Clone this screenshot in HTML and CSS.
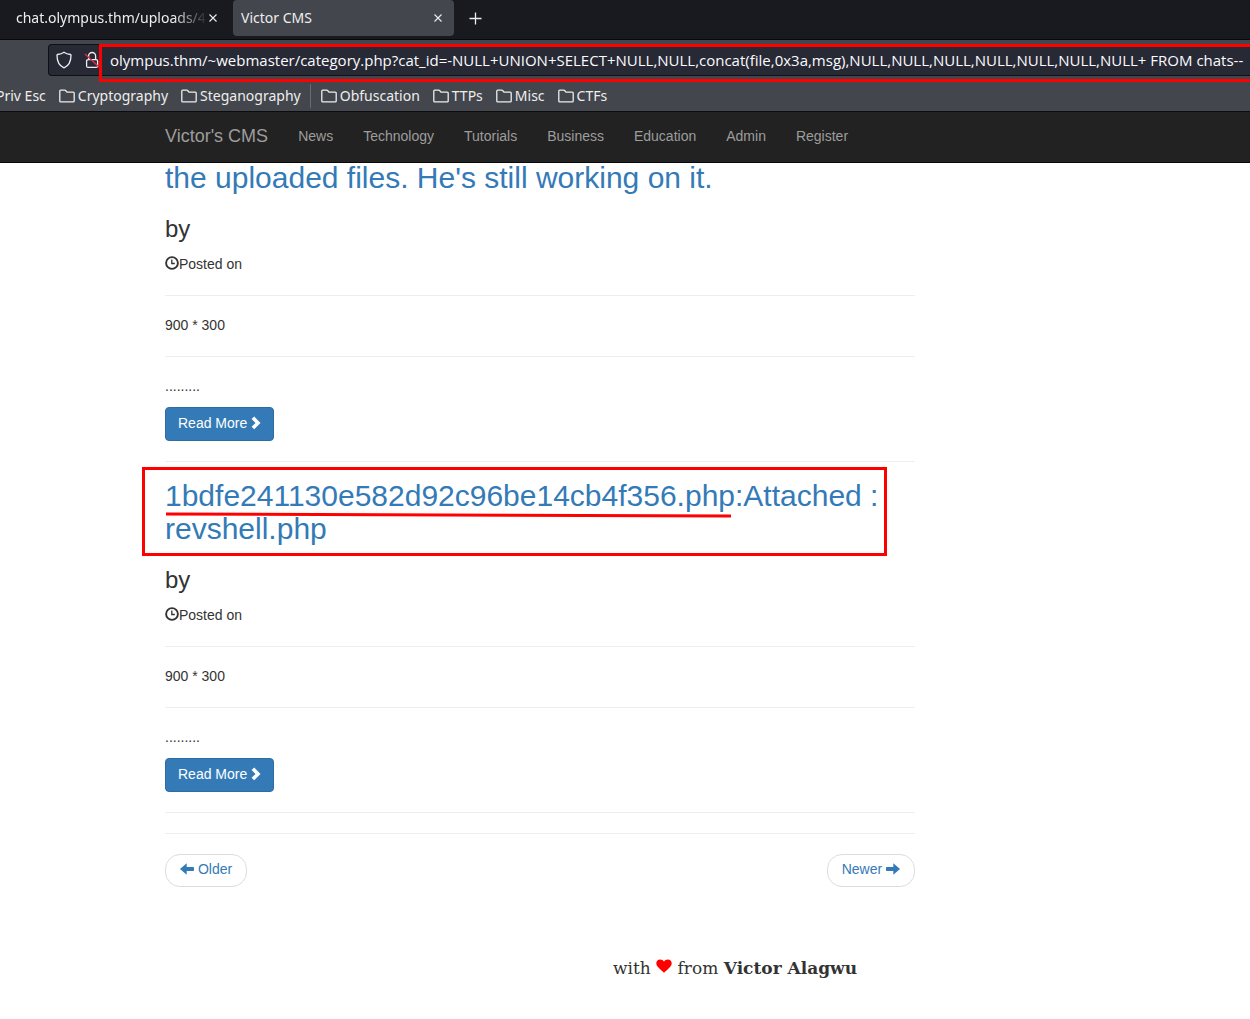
FILE: index.html
```html
<!DOCTYPE html>
<html lang="en">
<head>
<meta charset="utf-8">
<meta name="viewport" content="width=device-width, initial-scale=1">
<title>Victor CMS</title>
<link rel="stylesheet" href="styles.css">
</head>
<body>
<svg class="defs" aria-hidden="true">
  <symbol id="folder" viewBox="0 0 16 14"><path d="M1.7 12.8h12.6c.5 0 .9-.4.9-.9V4.100c0-.5-.4-.9-.9-.9H8L6.600 1.500c-.2-.2-.4-.3-.7-.3H1.700c-.5 0-.9.4-.9.9v9.800c0 .5.400.9.9.9z" fill="none" stroke="currentColor" stroke-width="1.300"/></symbol>
  <symbol id="close" viewBox="0 0 10 10"><path d="M1.5 1.5l7 7M8.500 1.500l-7 7" stroke="currentColor" stroke-width="1.1"/></symbol>
  <symbol id="clock" viewBox="0 0 14 14"><circle cx="7" cy="7" r="5.900" fill="none" stroke="currentColor" stroke-width="1.900"/><path d="M6.800 3.500v4h3" fill="none" stroke="currentColor" stroke-width="1.300"/></symbol>
  <symbol id="chevron" viewBox="0 0 10 14"><path d="M3.200.4L9.500 6.900 3.200 13.300.6 10.800 4.500 6.900.6 3z" fill="currentColor"/></symbol>
  <symbol id="arrow-right" viewBox="0 0 14 12"><path d="M14 6L7.300.2V4H.7c-.4 0-.7.3-.7.7v2.600c0 .4.300.7.7.7h6.600v3.800z" fill="currentColor"/></symbol>
  <symbol id="arrow-left" viewBox="0 0 14 12"><path d="M0 6L6.700.2V4h6.600c.4 0 .7.300.7.7v2.600c0 .4-.3.7-.7.7H6.700v3.800z" fill="currentColor"/></symbol>
</svg>

<header class="browser">
  <div class="tabs">
    <div class="tab">
      <span class="tab-title fading">chat.olympus.thm/uploads/47</span>
      <button class="tab-close" aria-label="Close tab"><svg width="10" height="10"><use href="#close"/></svg></button>
    </div>
    <div class="tab active">
      <span class="tab-title">Victor CMS</span>
      <button class="tab-close" aria-label="Close tab"><svg width="10" height="10"><use href="#close"/></svg></button>
    </div>
    <button class="new-tab" aria-label="New tab"><svg width="13" height="13" viewBox="0 0 13 13"><path d="M6.500.5v12M.5 6.500h12" stroke="currentColor" stroke-width="1.300"/></svg></button>
  </div>
  <div class="toolbar">
    <div class="address">
      <svg class="shield" width="16" height="18" viewBox="0 0 16 18"><path d="M8 1.200C6.200 2.500 3.800 3.200 1.600 3.500c-.4.100-.6.400-.6.700 0 5.300 1.500 10.300 7 12.600 5.500-2.300 7-7.300 7-12.600 0-.3-.2-.6-.6-.7C12.200 3.200 9.800 2.500 8 1.200z" fill="none" stroke="currentColor" stroke-width="1.300"/></svg>
      <svg class="lock" width="16" height="18" viewBox="0 0 16 18"><rect x="2.600" y="8.600" width="11" height="7.800" rx="1.500" fill="none" stroke="currentColor" stroke-width="1.300"/><path d="M4.600 8.600V5a3.500 3.500 0 0 1 7 0v3.600" fill="none" stroke="currentColor" stroke-width="1.300"/><path d="M1 3l14 13" stroke="#e22850" stroke-width="1.400"/></svg>
      <input class="url" type="text" aria-label="Address" value="olympus.thm/~webmaster/category.php?cat_id=-NULL+UNION+SELECT+NULL,NULL,concat(file,0x3a,msg),NULL,NULL,NULL,NULL,NULL,NULL,NULL+ FROM chats--">
    </div>
    <div class="url-mark"></div>
  </div>
  <nav class="bookmarks" aria-label="Bookmarks">
    <a href="#">Priv Esc</a>
    <a href="#"><svg width="16" height="14"><use href="#folder"/></svg>Cryptography</a>
    <a href="#"><svg width="16" height="14"><use href="#folder"/></svg>Steganography</a>
    <span class="separator"></span>
    <a href="#"><svg width="16" height="14"><use href="#folder"/></svg>Obfuscation</a>
    <a href="#"><svg width="16" height="14"><use href="#folder"/></svg>TTPs</a>
    <a href="#"><svg width="16" height="14"><use href="#folder"/></svg>Misc</a>
    <a href="#"><svg width="16" height="14"><use href="#folder"/></svg>CTFs</a>
  </nav>
</header>

<nav class="navbar" aria-label="Site">
  <a class="brand" href="#">Victor's CMS</a>
  <a href="#">News</a>
  <a href="#">Technology</a>
  <a href="#">Tutorials</a>
  <a href="#">Business</a>
  <a href="#">Education</a>
  <a href="#">Admin</a>
  <a href="#">Register</a>
</nav>

<main class="posts">
  <article>
    <h2><a href="#">the uploaded files. He's still working on it.</a></h2>
    <h3>by</h3>
    <p><svg class="clock" width="14" height="14"><use href="#clock"/></svg>Posted on</p>
    <hr>
    <p>900 * 300</p>
    <hr>
    <p>.........</p>
    <a class="read-more" href="#">Read More <svg width="10" height="14"><use href="#chevron"/></svg></a>
    <hr>
  </article>
  <article>
    <h2 class="marked"><a href="#">1bdfe241130e582d92c96be14cb4f356.php:Attached : revshell.php</a>
      <svg class="underline" width="568" height="8" viewBox="0 0 568 8"><path d="M1 3L566 5" stroke="#f00" stroke-width="3"/></svg>
    </h2>
    <h3>by</h3>
    <p><svg class="clock" width="14" height="14"><use href="#clock"/></svg>Posted on</p>
    <hr>
    <p>900 * 300</p>
    <hr>
    <p>.........</p>
    <a class="read-more" href="#">Read More <svg width="10" height="14"><use href="#chevron"/></svg></a>
    <hr>
  </article>
  <hr class="end">
  <div class="pager">
    <a href="#"><svg width="14" height="12"><use href="#arrow-left"/></svg> Older</a>
    <a href="#">Newer <svg width="14" height="12"><use href="#arrow-right"/></svg></a>
  </div>
</main>

<footer class="credit">with <svg width="16" height="14" viewBox="0 0 16 14"><path d="M8 13.800C6.500 12.200 4 10.300 2.200 8.200.9 6.700.3 5.500.3 4.200.3 2 2 .4 4.200.4 5.800.4 7.200 1.200 8 2.600 8.800 1.200 10.200.4 11.800.4c2.200 0 3.900 1.600 3.900 3.800 0 1.300-.6 2.500-1.900 4C12 10.300 9.500 12.200 8 13.800z" fill="#f00"/></svg> from <strong>Victor Alagwu</strong></footer>
</body>
</html>
```
FILE: styles.css
```css
* { box-sizing: border-box; }

body {
  margin: 0;
  background: #fff;
  color: #333;
  font: 14px/20px "Liberation Sans", Arial, sans-serif;
  overflow-x: hidden;
}

a { color: #337ab7; text-decoration: none; }
button { border: 0; padding: 0; background: none; color: inherit; }
.defs { display: none; }

/* Browser window */
.browser {
  background: #43464c;
  color: #eee;
  font: 14px/20px "Noto Sans", sans-serif;
  border-bottom: 1px solid #0c0c0e;
}

.tabs {
  display: flex;
  height: 40px;
  background: #191a1f;
  border-bottom: 1px solid #08080a;
}

.tab {
  display: flex;
  align-items: center;
  width: 221px;
  height: 36px;
  padding: 0 11px 0 8px;
}
.tab:first-child { width: 233px; padding: 0 15px 0 16px; }
.tab.active { background: #43464c; border-radius: 4px; }
.tab-title { flex: 1; overflow: hidden; white-space: nowrap; }
.fading {
  -webkit-mask-image: linear-gradient(to right, #000 82%, transparent);
  mask-image: linear-gradient(to right, #000 82%, transparent);
}
.tab-close { display: flex; }
.new-tab { margin-left: 15px; height: 37px; display: flex; align-items: center; }

.toolbar { position: relative; padding: 4px 0 4px 48px; }
.address {
  display: flex;
  align-items: center;
  height: 32px;
  padding-left: 7px;
  background: #272935;
  border: 1px solid #0f1014;
  border-right: 0;
  border-radius: 4px 0 0 4px;
}
.address svg { flex: none; }
.lock { margin-left: 12px; }
.url {
  flex: 1;
  min-width: 0;
  height: 30px;
  padding: 0 0 0 10px;
  border: 0;
  outline: 0;
  background: none;
  color: #fbfbfe;
  font: 15px/20px "Open Sans", "Noto Sans", sans-serif;
}
.url-mark {
  position: absolute;
  inset: 4px 0 -2px 99px;
  border: 3px solid #f00;
  border-right: 0;
}

.bookmarks {
  display: flex;
  align-items: center;
  gap: 13px;
  height: 31px;
  margin-left: -4px;
  white-space: nowrap;
}
.bookmarks a { display: flex; align-items: center; gap: 3px; color: inherit; }
.separator { width: 1px; height: 24px; margin: 0 -3px 0 -4px; background: #6a6c71; }

/* Site */
.navbar {
  position: relative;
  z-index: 1;
  display: flex;
  height: 51px;
  padding-left: 150px;
  background: #222;
  border-bottom: 1px solid #080808;
}
.navbar a { padding: 14px 15px; color: #9d9d9d; }
.navbar .brand { font-size: 18px; }

.posts { max-width: 915px; margin-top: -2px; padding-left: 165px; }

h2, h3 { font-weight: 400; margin: 0; }
h2 { font-size: 30px; line-height: 33px; margin-bottom: 22px; }
h3 { font-size: 24px; line-height: 26px; margin-bottom: 12px; }
p { margin: 0 0 11px; }
hr { height: 1px; margin: 21px 0 19px; border: 0; background: #eee; }
article > hr:last-child { margin: 20px 0 17px; }
hr.end { margin: 20px 0; }

.clock { vertical-align: -1px; }

.marked { position: relative; }
.marked::before {
  content: "";
  position: absolute;
  inset: -12px 28px -11px -23px;
  border: 3px solid #f00;
}
.underline { position: absolute; left: 0; top: 32px; }

.read-more {
  display: block;
  width: max-content;
  height: 34px;
  padding: 5px 12px;
  border: 1px solid #2e6da4;
  border-radius: 4px;
  background: #337ab7;
  color: #fff;
}
.read-more svg { vertical-align: -2px; }

.pager { display: flex; justify-content: space-between; }
.pager a {
  padding: 4px 14px 7px;
  border: 1px solid #ddd;
  border-radius: 15px;
}
.pager svg { vertical-align: -1px; }

.credit {
  padding: 69px 0 39px 220px;
  text-align: center;
  font: 17px/24px "DejaVu Serif", serif;
}
.credit svg { vertical-align: 1px; }
```
